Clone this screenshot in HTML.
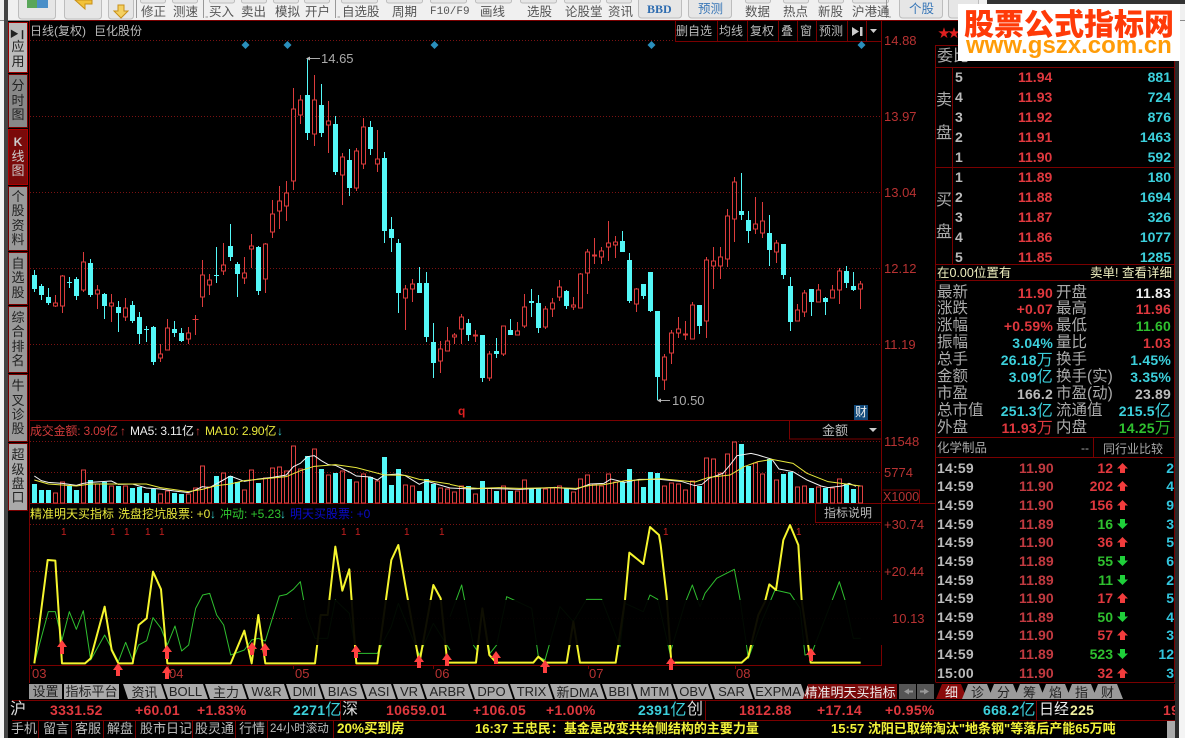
<!DOCTYPE html>
<html lang="zh"><head><meta charset="utf-8"><title>K线图</title>
<style>
html,body{margin:0;padding:0;background:#000}
#p{position:relative;width:1185px;height:738px;overflow:hidden;background:#000;font-family:"Liberation Sans","Noto Sans CJK SC",sans-serif;font-size:12px;color:#bbb}
#p svg.a{position:absolute;left:0;top:0}
.t{position:absolute;white-space:nowrap;line-height:16px;height:16px}
.b{position:absolute}
.tb{color:#555;font-size:12.5px;top:4px}
.lt{position:absolute;left:8px;width:20px;display:flex;flex-direction:column;align-items:center;justify-content:center;font-size:13px;line-height:14.4px;color:#222;background:#999;border:1px solid #7a0000;box-sizing:border-box}
.n{font-weight:bold;font-size:14px}
.lb{font-size:15.5px;color:#aaa;left:937px}
.lb2{font-size:15.5px;color:#aaa;left:1056px}
.v1{right:132px;font-weight:bold;font-size:14px;letter-spacing:.2px}
.v2{right:14px;font-weight:bold;font-size:14px;letter-spacing:.2px}
.u{font-weight:normal;font-size:16px}
.red{color:#e0383e}.cy{color:#3cd0dc}.gn{color:#2fc02f}.wh{color:#eee}.gy{color:#bbb}
.ax{color:#b83232;font-size:13px;left:884px}
.tab{position:absolute;top:684px;height:15px;background:#aaa;color:#222;font-size:13px;display:flex;align-items:center;justify-content:center;white-space:nowrap;clip-path:polygon(0 0,calc(100% - 5px) 0,100% 100%,5px 100%)}
.tr{position:absolute;top:684px;height:15px;width:31px;background:#9a9a9a;color:#222;font-size:13px;display:flex;align-items:center;justify-content:center;clip-path:polygon(6px 0,calc(100% - 6px) 0,100% 100%,0 100%)}
.tm{left:937px;color:#bbb;font-weight:bold;font-size:14px;letter-spacing:.2px}
.pr{left:1019px;color:#c23a40;font-weight:bold;font-size:14px;letter-spacing:.1px}
.q{right:72px;font-weight:bold;font-size:14px}
.l{right:11px;color:#33c5dd;font-weight:bold;font-size:14px}
.st{top:702px;font-weight:bold;font-size:14px;letter-spacing:.3px;color:#e0383e}
.bt{top:721px;color:#bbb;font-size:13px}
.y{color:#f2f23a;font-weight:bold;font-size:13px;top:721px}
</style></head><body><div id="p">

<!-- toolbar -->
<div class="b" style="left:0;top:0;width:1185px;height:20px;background:#f0f0f0;border-bottom:1px solid #8a8a8a"></div>
<div class="b" style="left:0;top:21px;width:4px;height:717px;background:#f4f4f4"></div>
<div class="b" style="left:4px;top:0;width:4px;height:738px;background:#444"></div>
<svg class="a" width="1185" height="21" viewBox="0 0 1185 21">
<g fill="#e6e6e6" stroke="#bdbdbd"><rect x="18.5" y="-6" width="37" height="25" rx="3"/><rect x="64.5" y="-6" width="37" height="25" rx="3"/><rect x="108.5" y="-6" width="25" height="25" rx="3"/><rect x="140.5" y="-6" width="25" height="9" rx="2"/><rect x="172.5" y="-6" width="25" height="9" rx="2"/><rect x="209.5" y="-6" width="25" height="9" rx="2"/><rect x="241.5" y="-6" width="25" height="9" rx="2"/><rect x="273.5" y="-6" width="25" height="9" rx="2"/><rect x="304.5" y="-6" width="25" height="9" rx="2"/><rect x="341.5" y="-6" width="36" height="9" rx="2"/><rect x="386.5" y="-6" width="36" height="9" rx="2"/><rect x="430.5" y="-6" width="36" height="9" rx="2"/><rect x="475.5" y="-6" width="36" height="9" rx="2"/><rect x="520.5" y="-6" width="36" height="9" rx="2"/><rect x="564.5" y="-6" width="36" height="9" rx="2"/><rect x="606.5" y="-6" width="25" height="9" rx="2"/><rect x="638.5" y="-6" width="43" height="24" rx="3"/><rect x="688.5" y="-6" width="43" height="24" rx="3"/><rect x="745.5" y="-6" width="25" height="9" rx="2"/><rect x="783.5" y="-6" width="25" height="9" rx="2"/><rect x="818.5" y="-6" width="25" height="9" rx="2"/><rect x="852.5" y="-6" width="36" height="9" rx="2"/><rect x="899.5" y="-6" width="43" height="24" rx="3"/><rect x="948.5" y="-6" width="30" height="24" rx="3"/></g>
<rect x="27" y="0" width="10" height="8" fill="#5aa65a"/><rect x="37" y="0" width="11" height="8" fill="#4a8fc8"/>
<path d="M75 0H92V4H85V9Z" fill="#f2c23a" stroke="#c89018"/>
<path d="M118 5h6v6h4l-7 7-7-7h4z" fill="#f4d060" stroke="#c89018"/>
<path d="M136.500 0V18M203.500 0V18M335.500 0V18M886.500 0V18" stroke="#999"/>
<path d="M205.500 17H208M337.500 17H340M888.500 17H891" stroke="#999"/>
</svg>
<div class="t tb" style="left:141px">修正</div><div class="t tb" style="left:173px">测速</div>
<div class="t tb" style="left:209px">买入</div><div class="t tb" style="left:241px">卖出</div><div class="t tb" style="left:275px">模拟</div><div class="t tb" style="left:305px">开户</div>
<div class="t tb" style="left:342px">自选股</div><div class="t tb" style="left:392px">周期</div>
<div class="t tb" style="left:430px;font-size:11px;font-family:'Liberation Mono',monospace">F10/F9</div>
<div class="t tb" style="left:480px">画线</div><div class="t tb" style="left:527px">选股</div><div class="t tb" style="left:565px">论股堂</div><div class="t tb" style="left:608px">资讯</div>
<div class="t" style="left:647px;top:1px;color:#2e6cb0;font:bold 12px/16px 'Liberation Serif',serif">BBD</div>
<div class="t tb" style="left:698px;top:1px;color:#3a78b8">预测</div>
<div class="t tb" style="left:745px">数据</div><div class="t tb" style="left:783px">热点</div><div class="t tb" style="left:818px">新股</div><div class="t tb" style="left:852px">沪港通</div>
<div class="t tb" style="left:909px;top:1px;color:#3a78b8">个股</div>

<!-- left tabs -->
<div class="lt" style="top:22px;height:51px;background:#bbb;border-color:#a00000;padding-top:2px"><span style="font-size:9px;line-height:12px">▶❙</span>应<br>用</div>
<div class="lt" style="top:74px;height:54px;background:#888">分<br>时<br>图</div>
<div class="lt" style="top:129px;height:56px;background:#7a0a0a;color:#ccc;border-color:#b00000"><b style="font-size:12px">K</b>线<br>图</div>
<div class="lt" style="top:186px;height:65px">个<br>股<br>资<br>料</div>
<div class="lt" style="top:252px;height:53px">自<br>选<br>股</div>
<div class="lt" style="top:306px;height:67px">综<br>合<br>排<br>名</div>
<div class="lt" style="top:374px;height:68px">牛<br>叉<br>诊<br>股</div>
<div class="lt" style="top:443px;height:68px;background:#aaa">超<br>级<br>盘<br>口</div>

<!-- chart graphics -->
<svg class="a" width="1185" height="738" viewBox="0 0 1185 738" shape-rendering="crispEdges">
<g stroke="#7a0000" fill="none">
<path d="M29.500 21V683M881.500 21V600M881.500 645V665M30 420.500H882M30 503.500H936M30 665.500H882M935.500 45V682M1174.500 45V682M30 20.500H1175M675 41.500H882M935 45.500H1175"/>
<path d="M675.500 21V41M717.500 21V41M747.500 21V41M778.500 21V41M797.500 21V41M816.500 21V41M847.500 21V41M866.500 21V41"/>
<path d="M789.500 421V439H882M882.500 490H919.500V503M815.500 504V522.500H882"/>
<path d="M935.500 67.500H1175M935.500 167.500H1175M935.500 264.500H1175M935.500 280.500H1175M935.500 437.500H1175M935.500 457.500H1175M935.500 682.500H1175M952.500 67V264M1093.500 437V457M1174.500 684V700"/>
<path d="M12 700.500H1175M12 720.500H1175M340.500 701V720M705.500 701V720M1036.500 701V720M38.500 721V738M71.500 721V738M103.500 721V738M135.500 721V738M192.500 721V738M235.500 721V738M267.500 721V738M333.500 721V738"/>
<path d="M31.500 665V669M168.500 665V669M293.500 665V669M433.500 665V669M588.500 665V669M735.500 665V669"/>
</g>
<g stroke="#7a1212" stroke-dasharray="1 2" fill="none">
<path d="M30 40.500H675M30 116.500H882M30 192.500H882M30 268.500H882M30 344.500H882M30 441.500H882M30 472.500H882M30 524.500H882M30 571.500H882M30 618.500H882"/>
</g>
<!-- diamonds -->
<path d="M245.500 41l4 4-4 4-4-4zM287.500 41l4 4-4 4-4-4zM434.500 41l4 4-4 4-4-4zM651.500 41l4 4-4 4-4-4zM861.500 41l4 4-4 4-4-4z" fill="#2a8fbc" shape-rendering="auto"/>
<!-- red candles -->
<path fill="none" stroke="#dc3c3c" d="M55.500 295V303M55.500 306V307M53.500 303h4v3h-4zM62.500 275V276M62.500 306V313M60.500 276h4v30h-4zM83.500 252V262M83.500 290V292M81.500 262h4v28h-4zM97.500 285V290M97.500 294V309M95.500 290h4v4h-4zM111.500 294V303M111.500 306V322M109.500 303h4v3h-4zM125.500 298V308M125.500 317V321M123.500 308h4v9h-4zM160.500 344V354M160.500 358V362M158.500 354h4v4h-4zM167.500 319V328M165.500 328h4v22h-4zM188.500 327V333M188.500 339V344M186.500 333h4v6h-4zM195.500 315V335M192.500 319.500h6M202.500 260V275M202.500 297V307M200.500 275h4v22h-4zM209.500 274V280M209.500 285V295M207.500 280h4v5h-4zM223.500 243V265M223.500 271V275M221.500 265h4v6h-4zM244.500 257V273M244.500 278V284M242.500 273h4v5h-4zM251.500 234V246M251.500 249V268M249.500 246h4v3h-4zM265.500 243V244M265.500 279V293M263.500 244h4v35h-4zM272.500 200V214M272.500 232V238M270.500 214h4v18h-4zM279.500 186V201M279.500 211V229M277.500 201h4v10h-4zM286.500 181V193M286.500 206V221M284.500 193h4v13h-4zM293.500 88V109M293.500 181V190M291.500 109h4v72h-4zM300.500 95V100M300.500 115V124M298.500 100h4v15h-4zM314.500 75V100M314.500 134V146M312.500 100h4v34h-4zM328.500 101V121M328.500 125V153M326.500 121h4v4h-4zM342.500 153V157M342.500 175V205M340.500 157h4v18h-4zM356.500 148V151M356.500 188V191M354.500 151h4v37h-4zM363.500 118V127M363.500 164V169M361.500 127h4v37h-4zM377.500 130V159M377.500 164V172M375.500 159h4v5h-4zM405.500 285V289M405.500 298V330M403.500 289h4v9h-4zM412.500 279V284M412.500 289V302M410.500 284h4v5h-4zM440.500 341V349M440.500 361V373M438.500 349h4v12h-4zM447.500 327V341M445.500 341h4v10h-4zM454.500 333V335M454.500 337V344M452.500 335h4v2h-4zM461.500 314V317M461.500 329V344M459.500 317h4v12h-4zM475.500 330V335M475.500 336V342M473.500 335h4v1h-4zM489.500 351V354M489.500 378V381M487.500 354h4v24h-4zM503.500 354V356M501.500 326h4v28h-4zM517.500 322V331M515.500 331h4v4h-4zM524.500 294V307M524.500 326V328M522.500 307h4v19h-4zM545.500 306V309M545.500 327V329M543.500 309h4v18h-4zM552.500 298V303M552.500 309V317M550.500 303h4v6h-4zM559.500 280V287M559.500 297V301M557.500 287h4v10h-4zM573.500 297V305M573.500 307V310M571.500 305h4v2h-4zM580.500 273V274M578.500 274h4v34h-4zM587.500 249V252M587.500 273V294M585.500 252h4v21h-4zM594.500 238V255M594.500 256V264M592.500 255h4v1h-4zM601.500 247V251M601.500 257V264M599.500 251h4v6h-4zM608.500 221V243M608.500 247V261M606.500 243h4v4h-4zM615.500 236V242M615.500 245V258M613.500 242h4v3h-4zM636.500 288V289M636.500 304V312M634.500 289h4v15h-4zM664.500 354V357M664.500 380V390M662.500 357h4v23h-4zM671.500 330V333M671.500 353V364M669.500 333h4v20h-4zM678.500 317V329M678.500 333V338M676.500 329h4v4h-4zM685.500 321V334M685.500 335V340M683.500 334h4v1h-4zM692.500 302V305M690.500 305h4v34h-4zM706.500 257V260M706.500 321V338M704.500 260h4v61h-4zM713.500 247V261M713.500 266V289M711.500 261h4v5h-4zM720.500 247V257M720.500 266V279M718.500 257h4v9h-4zM727.500 209V216M727.500 259V267M725.500 216h4v43h-4zM734.500 177V182M734.500 219V242M732.500 182h4v37h-4zM755.500 197V224M755.500 229V234M753.500 224h4v5h-4zM762.500 202V221M762.500 233V238M760.500 221h4v12h-4zM776.500 240V243M776.500 252V263M774.500 243h4v9h-4zM797.500 304V310M795.500 310h4v11h-4zM804.500 290V293M804.500 312V317M802.500 293h4v19h-4zM818.500 284V290M816.500 290h4v12h-4zM832.500 285V290M830.500 290h4v8h-4zM839.500 268V271M839.500 290V304M837.500 271h4v19h-4zM860.500 281V284M860.500 289V309M858.500 284h4v5h-4z"/>
<!-- cyan wicks -->
<path fill="none" stroke="#54f8f8" d="M34.500 270V292M41.500 284V300M48.500 288V305M69.500 277V288M76.500 277V300M90.500 259V297M104.500 293V319M118.500 301V332M132.500 301V323M139.500 312V344M146.500 326V342M153.500 326V365M174.500 321V337M181.500 328V342M216.500 247V283M230.500 224V261M237.500 262V297M258.500 246V295M307.500 58V140M321.500 84V137M335.500 116V175M349.500 149V196M370.500 121V155M384.500 152V243M391.500 217V252M398.500 239V313M419.500 267V293M426.500 272V342M433.500 323V378M468.500 319V341M482.500 335V382M496.500 338V358M510.500 319V335M531.500 289V317M538.500 295V333M566.500 290V309M622.500 231V252M629.500 253V303M643.500 284V299M650.500 272V312M657.500 311V400M699.500 305V334M741.500 173V220M748.500 211V243M769.500 215V266M783.500 244V279M790.500 277V331M811.500 289V316M825.500 297V315M846.500 266V288M853.500 272V291"/>
<!-- cyan bodies -->
<path fill="none" stroke="#54f8f8" stroke-width="5" d="M34.500 275V289M41.500 286V295M48.500 297V303M69.500 282V283M76.500 279V296M90.500 263V295M104.500 294V306M118.500 307V313M132.500 305V321M139.500 317V334M146.500 329V330M153.500 327V362M174.500 329V333M181.500 333V341M216.500 275V276M230.500 246V257M237.500 264V274M258.500 247V291M307.500 95V133M321.500 105V133M335.500 124V172M349.500 160V188M370.500 127V149M384.500 158V231M391.500 229V238M398.500 243V293M419.500 283V293M426.500 283V337M433.500 342V363M468.500 323V335M482.500 335V378M496.500 351V354M510.500 330V335M531.500 301V303M538.500 303V328M566.500 291V306M622.500 241V252M629.500 260V301M643.500 284V296M650.500 272V311M657.500 311V377M699.500 305V326M741.500 211V215M748.500 220V231M769.500 233V250M783.500 244V275M790.500 286V322M811.500 289V302M825.500 298V302M846.500 271V283M853.500 286V290"/>
<!-- labels leader -->
<path d="M308 58.500H320M658 400.500H670" stroke="#aaa" fill="none"/>
<path d="M306 58.500l4-2v4zM657 400.500l4-2v4z" fill="#bbb"/>
<!-- volume bars -->
<path fill="none" stroke="#e04040" d="M53.500 493h4V503h-4zM60.500 482h4V503h-4zM81.500 470h4V503h-4zM95.500 484h4V503h-4zM109.500 486h4V503h-4zM123.500 486h4V503h-4zM158.500 494h4V503h-4zM165.500 491h4V503h-4zM186.500 494h4V503h-4zM193.500 488h4V503h-4zM200.500 466h4V503h-4zM207.500 487h4V503h-4zM221.500 473h4V503h-4zM242.500 490h4V503h-4zM249.500 470h4V503h-4zM263.500 478h4V503h-4zM270.500 468h4V503h-4zM277.500 467h4V503h-4zM284.500 471h4V503h-4zM291.500 446h4V503h-4zM298.500 469h4V503h-4zM312.500 449h4V503h-4zM326.500 475h4V503h-4zM340.500 471h4V503h-4zM354.500 482h4V503h-4zM361.500 474h4V503h-4zM375.500 481h4V503h-4zM403.500 485h4V503h-4zM410.500 486h4V503h-4zM438.500 488h4V503h-4zM445.500 489h4V503h-4zM452.500 492h4V503h-4zM459.500 486h4V503h-4zM473.500 494h4V503h-4zM487.500 488h4V503h-4zM501.500 486h4V503h-4zM515.500 491h4V503h-4zM522.500 480h4V503h-4zM543.500 489h4V503h-4zM550.500 488h4V503h-4zM557.500 486h4V503h-4zM571.500 492h4V503h-4zM578.500 479h4V503h-4zM585.500 475h4V503h-4zM592.500 484h4V503h-4zM599.500 486h4V503h-4zM606.500 474h4V503h-4zM613.500 482h4V503h-4zM634.500 480h4V503h-4zM662.500 486h4V503h-4zM669.500 483h4V503h-4zM676.500 484h4V503h-4zM683.500 490h4V503h-4zM690.500 481h4V503h-4zM704.500 458h4V503h-4zM711.500 459h4V503h-4zM718.500 473h4V503h-4zM725.500 454h4V503h-4zM732.500 442h4V503h-4zM753.500 463h4V503h-4zM760.500 474h4V503h-4zM774.500 480h4V503h-4zM795.500 487h4V503h-4zM802.500 486h4V503h-4zM816.500 487h4V503h-4zM830.500 488h4V503h-4zM837.500 479h4V503h-4zM858.500 486h4V503h-4z"/>
<path fill="none" stroke="#54f8f8" stroke-width="5" d="M34.500 484V503M41.500 490V503M48.500 490V503M69.500 486V503M76.500 490V503M90.500 480V503M104.500 482V503M118.500 486V503M132.500 488V503M139.500 487V503M146.500 493V503M153.500 489V503M174.500 493V503M181.500 494V503M216.500 476V503M230.500 476V503M237.500 482V503M258.500 483V503M307.500 456V503M321.500 469V503M335.500 473V503M349.500 479V503M370.500 477V503M384.500 457V503M391.500 485V503M398.500 469V503M419.500 491V503M426.500 479V503M433.500 484V503M468.500 486V503M482.500 481V503M496.500 491V503M510.500 491V503M531.500 488V503M538.500 488V503M566.500 488V503M622.500 482V503M629.500 469V503M643.500 487V503M650.500 472V503M657.500 473V503M699.500 486V503M741.500 444V503M748.500 466V503M769.500 459V503M783.500 474V503M790.500 472V503M811.500 488V503M825.500 488V503M846.500 484V503M853.500 489V503"/>
</svg>

<svg class="a" width="1185" height="738" viewBox="0 0 1185 738">
<!-- MA lines -->
<g fill="none" transform="translate(0 420) scale(.33333)" stroke-width="3">
<polyline stroke="#f2f2f2" points="103,168 124,182 145,187 187,190 229,196 250,190 271,187 334,183 355,193 397,192 439,204 481,207 523,213 565,218 586,210 607,200 628,203 670,180 691,168 733,184 775,177 817,172 859,165 880,140 901,130 922,110 943,107 964,122 985,134 1006,136 1048,156 1069,168 1111,171 1132,180 1153,165 1195,162 1216,167 1258,193 1279,183 1350,204"/>
<polyline stroke="#e8e83c" points="103,180 145,192 187,195 229,198 271,192 439,192 481,203 565,215 607,208 650,197 691,192 733,182 775,178 859,170 901,152 943,139 1006,134 1069,143 1153,165 1216,166 1258,178 1350,192"/>
</g>
<g fill="none" transform="translate(450 420) scale(.33333)" stroke-width="3">
<polyline stroke="#f2f2f2" points="0,204 63,207 105,205 210,208 315,202 378,208 420,192 462,190 483,177 525,187 567,178 630,178 693,184 735,197 756,193 777,175 819,160 840,135 861,107 903,100 924,105 966,118 987,147 1029,155 1071,180 1113,198 1134,203 1176,198 1197,190 1218,199"/>
<polyline stroke="#e8e83c" points="0,193 42,202 84,205 147,203 210,205 315,203 378,205 420,196 462,194 525,182 567,180 630,176 693,182 735,186 777,172 840,165 882,140 924,125 966,118 1029,130 1071,160 1134,185 1197,193 1231,198"/>
</g>
<!-- indicator lines -->
<g fill="none" transform="translate(0 540) scale(.33333)" stroke-linejoin="round">
<polyline stroke="#2fbf2f" stroke-width="3" points="103,370 145,215 166,215 186,300 208,215 229,268 250,212 272,360 314,285 355,365 377,307 398,362 416,315 440,302 459,233 483,265 502,315 525,258 545,333 566,315 587,205 608,165 629,160 650,225 671,255 692,345 733,330 755,300 775,295 796,303 838,168 860,163 880,148 901,125 920,230 945,295 983,295 1006,180 1048,220 1069,340 1132,340 1174,260 1195,190 1258,345 1300,250 1350,330"/>
<polyline stroke="#f5f52e" stroke-width="6" points="103,370 143,60 166,62 186,370 255,370 272,355 314,200 335,330 355,370 398,370 416,255 440,235 459,95 483,148 502,370 692,370 733,272 755,370 775,225 796,370 945,370 962,225 983,225 1006,20 1027,152 1048,88 1069,370 1132,370 1174,60 1195,15 1222,170 1258,370 1300,135 1322,175 1342,368 1350,368"/>
</g>
<g fill="none" transform="translate(450 540) scale(.33333)" stroke-linejoin="round">
<polyline stroke="#2fbf2f" stroke-width="3" points="0,230 35,135 70,315 80,330 97,205 120,340 140,315 170,170 245,205 265,350 285,360 330,200 370,245 410,178 455,178 510,320 525,190 580,215 600,165 623,178 660,340 705,190 727,135 750,200 765,160 800,115 853,88 870,178 895,355 935,245 975,150 1020,160 1050,205 1065,345 1085,340 1168,125 1185,180 1210,295 1232,295"/>
<polyline stroke="#f5f52e" stroke-width="6" points="0,368 78,368 97,205 118,345 139,368 250,368 265,350 285,368 350,368 370,245 390,368 497,368 525,180 538,38 580,72 600,-39 627,-15 632,15 650,170 664,368 875,368 895,350 925,225 945,185 958,133 978,150 1000,0 1020,-45 1045,15 1055,180 1082,368 1232,368"/>
</g>
<!-- dark band -->
<rect x="293" y="600" width="592" height="45" fill="#000" fill-opacity=".94"/>
<!-- arrows -->
<path fill="#ff4040" d="M62 640l5 7h-3v7h-4v-7h-3zM118 663l5 7h-3v6h-4v-6h-3zM167 645l5 7h-3v7h-4v-7h-3zM167 666l5 7h-3v6h-4v-6h-3zM252 642l5 7h-3v6h-4v-6h-3zM265 643l5 7h-3v6h-4v-6h-3zM356 645l5 7h-3v6h-4v-6h-3zM419 655l5 7h-3v6h-4v-6h-3zM447 653l5 7h-3v6h-4v-6h-3zM496 651l5 7h-3v6h-4v-6h-3zM545 660l5 7h-3v6h-4v-6h-3zM671 657l5 7h-3v6h-4v-6h-3zM811 648l5 7h-3v6h-4v-6h-3z"/>
<!-- tick arrows -->
<path fill="#f23c3c" d="M1122.500 463l5.500 5.500h-3v4.500h-5v-4.500h-3zM1122.500 481l5.500 5.500h-3v4.500h-5v-4.500h-3zM1122.500 500l5.500 5.500h-3v4.500h-5v-4.500h-3zM1122.500 537l5.500 5.500h-3v4.500h-5v-4.500h-3zM1122.500 593l5.500 5.500h-3v4.500h-5v-4.500h-3zM1122.500 630l5.500 5.500h-3v4.500h-5v-4.500h-3zM1122.500 668l5.500 5.500h-3v4.500h-5v-4.500h-3z"/>
<path fill="#1fd03a" d="M1120 519h5v4.500h3l-5.500 5.500-5.500-5.500h3zM1120 556h5v4.500h3l-5.500 5.500-5.500-5.500h3zM1120 575h5v4.500h3l-5.500 5.500-5.500-5.500h3zM1120 612h5v4.500h3l-5.500 5.500-5.500-5.500h3zM1120 649h5v4.500h3l-5.500 5.500-5.500-5.500h3z"/>
<!-- button icons -->
<path fill="#ccc" d="M852 27l7 4.500-7 4.500zM860 27h2.500v9H860zM870 29h7l-3.500 4z"/>
<path fill="#ccc" d="M869 428h8l-4 4z"/>
</svg>

<!-- chart header -->
<div class="t" style="left:30px;top:23px;font-size:12px;color:#bbb">日线(复权)</div><div class="t" style="left:94px;top:23px;color:#bbb;font-size:12px">巨化股份</div>
<div class="t" style="left:676px;top:23px;font-size:12px">删自选</div><div class="t" style="left:719px;top:23px">均线</div><div class="t" style="left:750px;top:23px">复权</div><div class="t" style="left:781px;top:23px">叠</div><div class="t" style="left:800px;top:23px">窗</div><div class="t" style="left:819px;top:23px">预测</div>
<div class="t" style="left:321px;top:51px;font-size:13px;color:#aaa">14.65</div>
<div class="t" style="left:672px;top:393px;font-size:13px;color:#aaa">10.50</div>
<div class="t" style="left:458px;top:403px;color:#e02020;font-weight:bold;font-size:12px">q</div>
<div class="t" style="left:854px;top:405px;width:14px;height:15px;line-height:15px;text-align:center;background:#124a7a;color:#eee;font-size:12px">财</div>

<!-- axes -->
<div class="t ax" style="top:33px">14.88</div><div class="t ax" style="top:109px">13.97</div><div class="t ax" style="top:185px">13.04</div><div class="t ax" style="top:261px">12.12</div><div class="t ax" style="top:337px">11.19</div>
<div class="t ax" style="top:434px">11548</div><div class="t ax" style="top:465px">5774</div><div class="t ax" style="top:489px;font-size:12.5px;left:883px">X1000</div>
<div class="t ax" style="top:517px">+30.74</div><div class="t ax" style="top:564px">+20.44</div><div class="t ax" style="top:611px;left:892px">10.13</div>

<!-- volume header -->
<div class="t" style="left:30px;top:423px;color:#d03a3a;letter-spacing:-.2px">成交金额: 3.09亿</div><div class="t" style="left:120px;top:423px;color:#d03a3a">↑</div>
<div class="t" style="left:130px;top:423px;color:#eee;letter-spacing:-.2px">MA5: 3.11亿</div><div class="t" style="left:195px;top:423px;color:#d03a3a">↑</div>
<div class="t" style="left:205px;top:423px;color:#e8e83c;letter-spacing:-.2px">MA10: 2.90亿</div><div class="t" style="left:277px;top:423px;color:#3cc">↓</div>
<div class="t" style="left:822px;top:423px;color:#bbb;font-size:13px">金额</div>

<!-- indicator header -->
<div class="t" style="left:30px;top:506px;color:#e8e83c">精准明天买指标</div>
<div class="t" style="left:118px;top:506px;color:#e8e83c">洗盘挖坑股票: +0</div><div class="t" style="left:210px;top:506px;color:#3cc">↓</div>
<div class="t" style="left:220px;top:506px;color:#2fc42f">冲动: +5.23</div><div class="t" style="left:280px;top:506px;color:#3cc">↓</div>
<div class="t" style="left:290px;top:506px;color:#0a0ac8">明天买股票: +0</div>
<div class="t" style="left:824px;top:505px;font-size:12px;color:#bbb">指标说明</div>
<div class="t red" style="left:61px;top:525px;font-size:10px;color:#c82020">1</div><div class="t" style="left:110px;top:525px;font-size:10px;color:#c82020">1</div><div class="t" style="left:124px;top:525px;font-size:10px;color:#c82020">1</div><div class="t" style="left:145px;top:525px;font-size:10px;color:#c82020">1</div><div class="t" style="left:159px;top:525px;font-size:10px;color:#c82020">1</div><div class="t" style="left:341px;top:525px;font-size:10px;color:#c82020">1</div><div class="t" style="left:355px;top:525px;font-size:10px;color:#c82020">1</div><div class="t" style="left:404px;top:525px;font-size:10px;color:#c82020">1</div><div class="t" style="left:439px;top:525px;font-size:10px;color:#c82020">1</div><div class="t" style="left:663px;top:525px;font-size:10px;color:#c82020">1</div><div class="t" style="left:796px;top:525px;font-size:10px;color:#c82020">1</div>
<div class="t" style="left:32px;top:666px;color:#b83232;font-size:13px">03</div><div class="t" style="left:169px;top:666px;color:#b83232;font-size:13px">04</div><div class="t" style="left:295px;top:666px;color:#b83232;font-size:13px">05</div><div class="t" style="left:435px;top:666px;color:#b83232;font-size:13px">06</div><div class="t" style="left:589px;top:666px;color:#b83232;font-size:13px">07</div><div class="t" style="left:736px;top:666px;color:#b83232;font-size:13px">08</div>

<!-- tabs -->
<div class="b" style="left:29px;top:684px;width:33px;height:15px;background:#999;color:#222;font-size:13px;line-height:15px;text-align:center">设置</div>
<div class="b" style="left:64px;top:684px;width:55px;height:15px;background:#aaa;color:#222;font-size:13px;line-height:15px;text-align:center">指标平台</div>
<div class="tab" style="left:123px;width:43px">资讯</div><div class="tab" style="left:163px;width:45px">BOLL</div><div class="tab" style="left:205px;width:42px">主力</div><div class="tab" style="left:244px;width:45px">W&amp;R</div><div class="tab" style="left:286px;width:37px">DMI</div><div class="tab" style="left:320px;width:45px">BIAS</div><div class="tab" style="left:362px;width:34px">ASI</div><div class="tab" style="left:393px;width:32px">VR</div><div class="tab" style="left:422px;width:51px">ARBR</div><div class="tab" style="left:470px;width:43px">DPO</div><div class="tab" style="left:510px;width:43px">TRIX</div><div class="tab" style="left:550px;width:55px">新DMA</div><div class="tab" style="left:602px;width:34px">BBI</div><div class="tab" style="left:633px;width:43px">MTM</div><div class="tab" style="left:673px;width:40px">OBV</div><div class="tab" style="left:710px;width:43px">SAR</div><div class="tab" style="left:750px;width:56px">EXPMA</div>
<div class="tab" style="left:803px;width:94px;background:#7a0a0a;color:#eee;clip-path:polygon(5px 0,100% 0,100% 100%,0 100%)">精准明天买指标</div>
<div class="b" style="left:899px;top:684px;width:17px;height:15px;background:#555"></div><div class="b" style="left:917px;top:684px;width:17px;height:15px;background:#555"></div>
<svg class="a" width="1185" height="738" viewBox="0 0 1185 738"><path fill="#999" d="M904 691.500l5-3v2h4v2h-4v2zM929 691.500l-5-3v2h-4v2h4v2z"/></svg>

<div class="tr" style="left:936px;background:#8a0a0a;color:#eee">细</div><div class="tr" style="left:962px">诊</div><div class="tr" style="left:988px">分</div><div class="tr" style="left:1014px">筹</div><div class="tr" style="left:1040px">焰</div><div class="tr" style="left:1066px">指</div><div class="tr" style="left:1092px">财</div>

<!-- right panel -->
<div class="t" style="left:937px;top:49px;font-size:16px;color:#aaa">委比</div>
<div class="t" style="left:936px;top:93px;font-size:16px;color:#aaa">卖</div><div class="t" style="left:936px;top:126px;font-size:16px;color:#aaa">盘</div>
<div class="t" style="left:936px;top:193px;font-size:16px;color:#aaa">买</div><div class="t" style="left:936px;top:225px;font-size:16px;color:#aaa">盘</div>

<div class="t n gy" style="left:955px;top:69px">5</div><div class="t n red" style="left:1018px;top:69px">11.94</div><div class="t n cy" style="right:14px;top:69px">881</div>
<div class="t n gy" style="left:955px;top:89px">4</div><div class="t n red" style="left:1018px;top:89px">11.93</div><div class="t n cy" style="right:14px;top:89px">724</div>
<div class="t n gy" style="left:955px;top:109px">3</div><div class="t n red" style="left:1018px;top:109px">11.92</div><div class="t n cy" style="right:14px;top:109px">876</div>
<div class="t n gy" style="left:955px;top:129px">2</div><div class="t n red" style="left:1018px;top:129px">11.91</div><div class="t n cy" style="right:14px;top:129px">1463</div>
<div class="t n gy" style="left:955px;top:149px">1</div><div class="t n red" style="left:1018px;top:149px">11.90</div><div class="t n cy" style="right:14px;top:149px">592</div>
<div class="t n gy" style="left:955px;top:169px">1</div><div class="t n red" style="left:1018px;top:169px">11.89</div><div class="t n cy" style="right:14px;top:169px">180</div>
<div class="t n gy" style="left:955px;top:189px">2</div><div class="t n red" style="left:1018px;top:189px">11.88</div><div class="t n cy" style="right:14px;top:189px">1694</div>
<div class="t n gy" style="left:955px;top:209px">3</div><div class="t n red" style="left:1018px;top:209px">11.87</div><div class="t n cy" style="right:14px;top:209px">326</div>
<div class="t n gy" style="left:955px;top:229px">4</div><div class="t n red" style="left:1018px;top:229px">11.86</div><div class="t n cy" style="right:14px;top:229px">1077</div>
<div class="t n gy" style="left:955px;top:249px">5</div><div class="t n red" style="left:1018px;top:249px">11.85</div><div class="t n cy" style="right:14px;top:249px">1285</div>

<div class="t" style="left:937px;top:265px;color:#f0f0c0;font-size:12.5px">在0.00位置有</div>
<div class="t" style="right:13px;top:265px;color:#f0f0c0;font-size:12.5px">卖单! 查看详细</div>

<div class="t lb" style="top:285px">最新</div><div class="t v1 red" style="top:285px">11.90</div><div class="t lb2" style="top:285px">开盘</div><div class="t v2 wh" style="top:285px">11.83</div>
<div class="t lb" style="top:301px">涨跌</div><div class="t v1 red" style="top:301px">+0.07</div><div class="t lb2" style="top:301px">最高</div><div class="t v2 red" style="top:301px">11.96</div>
<div class="t lb" style="top:318px">涨幅</div><div class="t v1 red" style="top:318px">+0.59%</div><div class="t lb2" style="top:318px">最低</div><div class="t v2 gn" style="top:318px">11.60</div>
<div class="t lb" style="top:335px">振幅</div><div class="t v1 cy" style="top:335px">3.04%</div><div class="t lb2" style="top:335px">量比</div><div class="t v2 red" style="top:335px">1.03</div>
<div class="t lb" style="top:352px">总手</div><div class="t v1 cy" style="top:352px">26.18<span class="u">万</span></div><div class="t lb2" style="top:352px">换手</div><div class="t v2 cy" style="top:352px">1.45%</div>
<div class="t lb" style="top:369px">金额</div><div class="t v1 cy" style="top:369px">3.09<span class="u">亿</span></div><div class="t lb2" style="top:369px">换手(实)</div><div class="t v2 cy" style="top:369px">3.35%</div>
<div class="t lb" style="top:386px">市盈</div><div class="t v1 gy" style="top:386px">166.2</div><div class="t lb2" style="top:386px">市盈(动)</div><div class="t v2 gy" style="top:386px">23.89</div>
<div class="t lb" style="top:403px">总市值</div><div class="t v1 cy" style="top:403px">251.3<span class="u">亿</span></div><div class="t lb2" style="top:403px">流通值</div><div class="t v2 cy" style="top:403px">215.5<span class="u">亿</span></div>
<div class="t lb" style="top:420px">外盘</div><div class="t v1 red" style="top:420px">11.93<span class="u">万</span></div><div class="t lb2" style="top:420px">内盘</div><div class="t v2 gn" style="top:420px">14.25<span class="u">万</span></div>

<div class="t" style="left:937px;top:440px;font-size:12.5px;color:#aaa">化学制品</div><div class="t" style="left:1081px;top:440px;color:#aaa">--</div><div class="t" style="left:1103px;top:441px;font-size:12px;color:#aaa">同行业比较</div>

<div class="t tm" style="top:460px">14:59</div><div class="t pr" style="top:460px">11.90</div><div class="t q red" style="top:460px">12</div><div class="t l" style="top:460px">2</div>
<div class="t tm" style="top:478px">14:59</div><div class="t pr" style="top:478px">11.90</div><div class="t q red" style="top:478px">202</div><div class="t l" style="top:478px">4</div>
<div class="t tm" style="top:497px">14:59</div><div class="t pr" style="top:497px">11.90</div><div class="t q red" style="top:497px">156</div><div class="t l" style="top:497px">9</div>
<div class="t tm" style="top:516px">14:59</div><div class="t pr" style="top:516px">11.89</div><div class="t q gn" style="top:516px">16</div><div class="t l" style="top:516px">3</div>
<div class="t tm" style="top:534px">14:59</div><div class="t pr" style="top:534px">11.90</div><div class="t q red" style="top:534px">36</div><div class="t l" style="top:534px">5</div>
<div class="t tm" style="top:553px">14:59</div><div class="t pr" style="top:553px">11.89</div><div class="t q gn" style="top:553px">55</div><div class="t l" style="top:553px">6</div>
<div class="t tm" style="top:572px">14:59</div><div class="t pr" style="top:572px">11.89</div><div class="t q gn" style="top:572px">11</div><div class="t l" style="top:572px">2</div>
<div class="t tm" style="top:590px">14:59</div><div class="t pr" style="top:590px">11.90</div><div class="t q red" style="top:590px">17</div><div class="t l" style="top:590px">5</div>
<div class="t tm" style="top:609px">14:59</div><div class="t pr" style="top:609px">11.89</div><div class="t q gn" style="top:609px">50</div><div class="t l" style="top:609px">4</div>
<div class="t tm" style="top:627px">14:59</div><div class="t pr" style="top:627px">11.90</div><div class="t q red" style="top:627px">57</div><div class="t l" style="top:627px">3</div>
<div class="t tm" style="top:646px">14:59</div><div class="t pr" style="top:646px">11.89</div><div class="t q gn" style="top:646px">523</div><div class="t l" style="top:646px">12</div>
<div class="t tm" style="top:665px">15:00</div><div class="t pr" style="top:665px">11.90</div><div class="t q red" style="top:665px">32</div><div class="t l" style="top:665px">3</div>

<!-- status row -->
<div class="t" style="left:10px;top:702px;font-size:16px;color:#ddd">沪</div>
<div class="t st" style="left:50px">3331.52</div><div class="t st" style="left:135px">+60.01</div><div class="t st" style="left:197px">+1.83%</div>
<div class="t st cy" style="left:293px;color:#3cd0dc">2271<span class="u">亿</span></div>
<div class="t" style="left:342px;top:702px;font-size:16px;color:#ddd">深</div>
<div class="t st" style="left:386px">10659.01</div><div class="t st" style="left:473px">+106.05</div><div class="t st" style="left:546px">+1.00%</div>
<div class="t st" style="left:638px;color:#3cd0dc">2391<span class="u">亿</span></div>
<div class="t" style="left:687px;top:702px;font-size:16px;color:#ddd">创</div>
<div class="t st" style="left:739px">1812.88</div><div class="t st" style="left:817px">+17.14</div><div class="t st" style="left:885px">+0.95%</div>
<div class="t st" style="left:983px;color:#3cd0dc">668.2<span class="u">亿</span></div>
<div class="t" style="left:1039px;top:702px;font-size:15px;color:#eee">日经</div><div class="t st" style="left:1070px;color:#f0f0a0">225</div>
<div class="t st" style="left:1163px;width:12px;overflow:hidden">19</div>

<!-- bottom row -->
<div class="t bt" style="left:11px">手机</div><div class="t bt" style="left:43px">留言</div><div class="t bt" style="left:75px">客服</div><div class="t bt" style="left:107px">解盘</div><div class="t bt" style="left:140px">股市日记</div><div class="t bt" style="left:195px">股灵通</div><div class="t bt" style="left:239px">行情</div><div class="t bt" style="left:270px;font-size:11.5px">24小时滚动</div>
<div class="t y" style="left:337px;font-size:13.5px">20%买到房</div>
<div class="t y" style="left:475px">16:37 王忠民：基金是改变共给侧结构的主要力量</div>
<div class="t y" style="left:831px;width:336px;overflow:hidden">15:57 沈阳已取缔淘汰"地条钢"等落后产能65万吨</div>
<div class="b" style="left:1167px;top:721px;width:8px;height:17px;background:#aaa"></div>

<!-- right edge -->
<div class="b" style="left:1175px;top:21px;width:4px;height:717px;background:#2a2a2a"></div>
<div class="b" style="left:1179px;top:21px;width:6px;height:717px;background:#f4f4f4"></div>

<!-- stars + logo box -->
<div class="t" style="left:938px;top:25px;color:#e02020;font-size:12px;letter-spacing:-2px">★★</div>
<div class="b" style="left:987px;top:0;width:198px;height:4px;background:#333"></div>
<div class="b" style="left:958px;top:4px;width:222px;height:57px;background:#fff"></div>
<div class="t" style="left:964px;top:5px;height:34px;line-height:34px;font-size:30px;font-weight:900;color:#ff3a08;font-family:'Noto Sans CJK SC',sans-serif">股票公式指标网</div>
<div class="t" style="left:966px;top:32px;height:28px;line-height:28px;font-size:24px;font-weight:bold;color:#ff9c08">www.gszx.com.cn</div>

</div></body></html>
